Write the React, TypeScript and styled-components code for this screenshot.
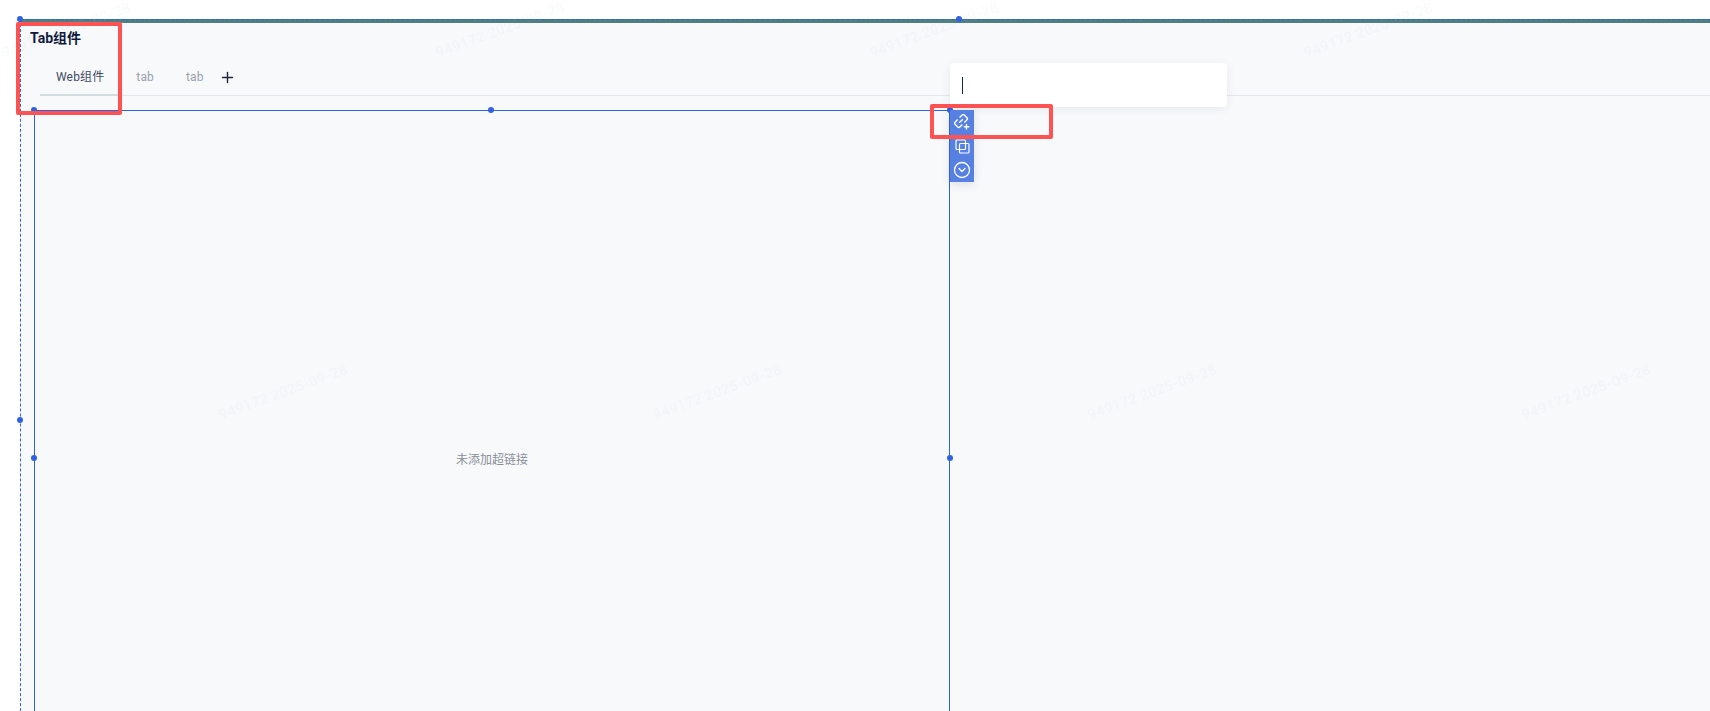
import * as React from 'react';
import styled, { createGlobalStyle } from 'styled-components';
import { Plus, CircleChevronDown } from 'lucide-react';

const GlobalStyle = createGlobalStyle`
	html,
	body {
		margin: 0;
		padding: 0;
		background: #fff;
	}
	body {
		font-family: Roboto, 'Noto Sans CJK SC', sans-serif;
	}
`;

const BLUE = '#2f62e0';

const Page = styled.div`
	position: relative;
	width: 1710px;
	height: 711px;
	padding: 19px 0 0 20px;
	box-sizing: border-box;
	overflow: hidden;
	background: #fff;
`;

const Frame = styled.section`
	position: relative;
	height: 802px;
	box-sizing: border-box;
	background: #f8f9fb;
	border-left: 1px dashed ${BLUE};
`;

const TopBar = styled.div`
	height: 4px;
	box-sizing: border-box;
	background: #4f7f80;
	border-top: 1px dashed ${BLUE};
`;

const Title = styled.h2`
	margin: 0;
	height: 28px;
	padding-left: 9px;
	font-size: 14px;
	font-weight: 700;
	line-height: 30px;
	color: #0f1a3a;
`;

const TabBar = styled.div`
	display: flex;
	align-items: stretch;
	height: 36px;
	margin: 9px 0 0 19px;
	box-sizing: border-box;
	border-bottom: 1px solid #e5e7eb;
`;

const Tab = styled.div<{ $active?: boolean }>`
	padding: 0 16px;
	margin-bottom: -1px;
	font-size: 12px;
	letter-spacing: 0.15px;
	line-height: 34px;
	color: ${p => (p.$active ? '#3f4a63' : '#9aa1ad')};
	border-bottom: 2px solid ${p => (p.$active ? '#d3dde0' : 'transparent')};
`;

const AddTab = styled.div`
	display: flex;
	align-items: center;
	height: 34px;
	margin-left: -1px;
	color: #1d2740;
`;

const LinkPane = styled.div`
	position: relative;
	display: flex;
	align-items: center;
	justify-content: center;
	width: 916px;
	height: 696px;
	margin: 14px 0 0 13px;
	box-sizing: border-box;
	border-top: 1px solid ${BLUE};
	border-left: 1px solid ${BLUE};
	border-right: 1px solid ${BLUE};
	font-size: 12px;
	color: #8a8f99;
`;

const Handle = styled.span<{ $x: string; $y: string }>`
	position: absolute;
	left: ${p => p.$x};
	top: ${p => p.$y};
	width: 6px;
	height: 6px;
	margin: -3px 0 0 -3px;
	border-radius: 50%;
	background: ${BLUE};
`;

const LinkInput = styled.div`
	position: absolute;
	left: 950px;
	top: 63px;
	display: flex;
	align-items: center;
	width: 277px;
	height: 44px;
	padding-left: 12px;
	box-sizing: border-box;
	border-radius: 4px;
	background: #fff;
	box-shadow: 0 2px 10px rgba(30, 50, 90, 0.08);
`;

const Caret = styled.span`
	width: 1px;
	height: 17px;
	background: #0f2a4a;
`;

const ToolStrip = styled.div`
	position: absolute;
	left: 950px;
	top: 110px;
	display: flex;
	flex-direction: column;
	align-items: center;
	width: 24px;
	height: 72px;
	background: #5680e2;
	box-shadow: 0 3px 10px rgba(30, 50, 90, 0.12);
	color: #fff;
`;

const ToolButton = styled.div`
	display: flex;
	align-items: center;
	justify-content: center;
	height: 24px;
	width: 24px;
`;

const Highlight = styled.div<{ $x: number; $y: number; $w: number; $h: number }>`
	position: absolute;
	left: ${p => p.$x}px;
	top: ${p => p.$y}px;
	width: ${p => p.$w}px;
	height: ${p => p.$h}px;
	box-sizing: border-box;
	border: 4px solid #ff5252;
	border-radius: 2px;
`;

const WatermarkLayer = styled.div`
	position: absolute;
	inset: 0;
	pointer-events: none;
`;

const Watermark = styled.span<{ $x: number; $y: number }>`
	position: absolute;
	left: ${p => p.$x}px;
	top: ${p => p.$y}px;
	transform: translate(-50%, -50%) rotate(-20deg);
	font-size: 15px;
	font-weight: 700;
	white-space: nowrap;
	color: rgba(190, 198, 210, 0.08);
`;

const LinkPlusIcon = () => (
	<svg width="16" height="16" viewBox="0 0 16 16" fill="none" stroke="currentColor" strokeWidth="1.4">
		<g transform="rotate(-45 7 7)">
			<path d="M5.6 3.6H2a1.5 1.5 0 0 0-1.5 1.5v3.8A1.5 1.5 0 0 0 2 10.4h3.6" />
			<path d="M8.4 3.6H12a1.5 1.5 0 0 1 1.5 1.5v3.8a1.5 1.5 0 0 1-1.5 1.5H8.4" />
			<path d="M4.4 7h5.2" />
		</g>
		<path d="M12.5 10v5.5M9.8 12.8h5.5" />
	</svg>
);

const CopyIcon = () => (
	<svg width="15" height="15" viewBox="0 0 15 15" fill="none" stroke="currentColor" strokeWidth="1.2">
		<rect x="1" y="1" width="9.5" height="9.5" rx="1" />
		<rect x="4.5" y="4.5" width="9.5" height="9.5" rx="1" />
	</svg>
);

const marks = [
	[66, 30],
	[500, 30],
	[934, 30],
	[1368, 30],
	[283, 392],
	[717, 392],
	[1152, 392],
	[1586, 392],
];

const paneHandles = [
	['-1px', '-1px'],
	['calc(50% - 1px)', '-1px'],
	['calc(100% + 1px)', '-1px'],
	['-1px', 'calc(50% - 1px)'],
	['calc(100% + 1px)', 'calc(50% - 1px)'],
];

export default function App() {
	return (
		<Page>
			<GlobalStyle />
			<Frame>
				<TopBar />
				<Title>Tab组件</Title>
				<TabBar>
					<Tab $active>Web组件</Tab>
					<Tab>tab</Tab>
					<Tab>tab</Tab>
					<AddTab>
						<Plus size={17} strokeWidth={2} />
					</AddTab>
				</TabBar>
				<LinkPane>
					未添加超链接
					{paneHandles.map(([x, y]) => (
						<Handle key={x + y} $x={x} $y={y} />
					))}
				</LinkPane>
				<Handle $x="-1px" $y="0" />
				<Handle $x="938px" $y="0" />
				<Handle $x="-1px" $y="50%" />
			</Frame>
			<LinkInput>
				<Caret />
			</LinkInput>
			<ToolStrip>
				<ToolButton>
					<LinkPlusIcon />
				</ToolButton>
				<ToolButton>
					<CopyIcon />
				</ToolButton>
				<ToolButton>
					<CircleChevronDown size={18} strokeWidth={1.7} />
				</ToolButton>
			</ToolStrip>
			<Highlight $x={16} $y={22} $w={106} $h={93} />
			<Highlight $x={930} $y={104} $w={123} $h={35} />
			<WatermarkLayer>
				{marks.map(([x, y]) => (
					<Watermark key={x} $x={x} $y={y}>
						949172 2025-09-28
					</Watermark>
				))}
			</WatermarkLayer>
		</Page>
	);
}
